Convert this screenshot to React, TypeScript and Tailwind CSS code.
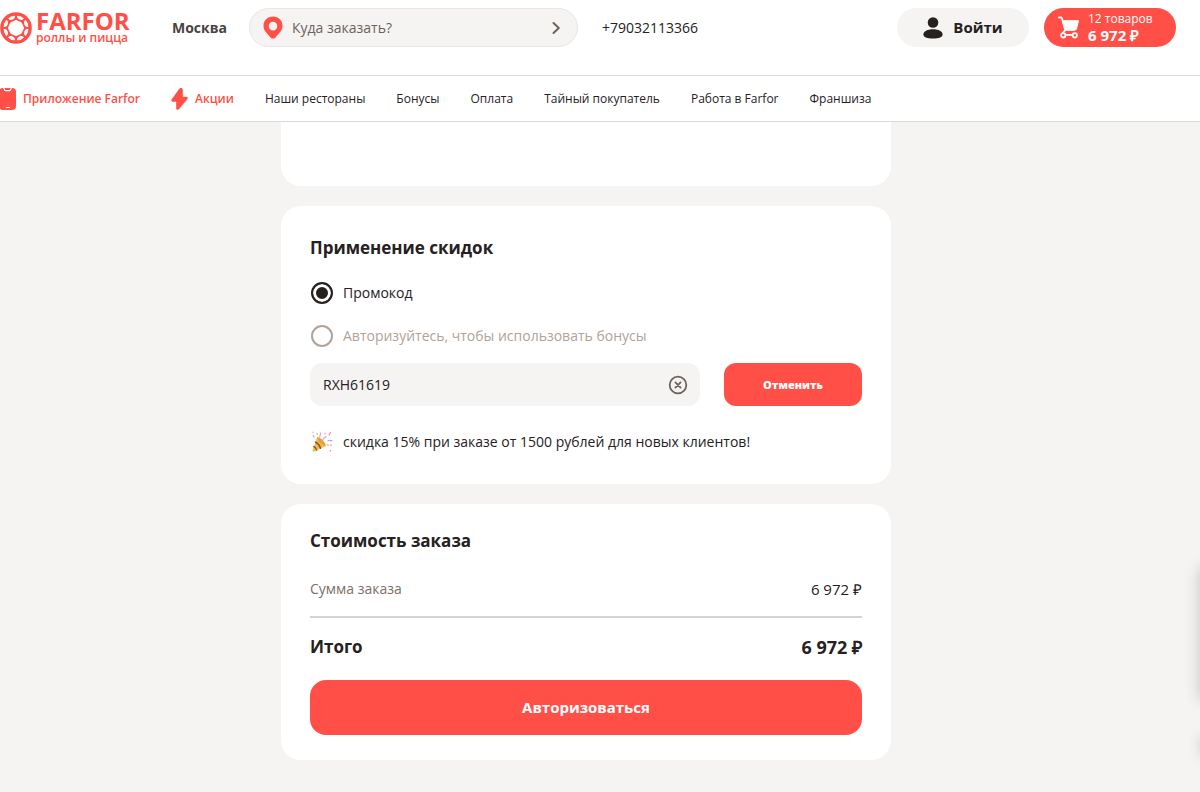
import { useState } from "react"

const links = ["Наши рестораны", "Бонусы", "Оплата", "Тайный покупатель", "Работа в Farfor", "Франшиза"]

const petals = [0, 45, 90, 135, 180, 225, 270, 315]

function LogoMark() {
  return (
    <svg viewBox="0 0 32 32" className="size-8 shrink-0" aria-hidden="true">
      <circle cx="16" cy="16" r="15.8" fill="#ff4f47" />
      <path d="M16 8.300 21.300 10.700 23.700 16 21.300 21.300 16 23.700 10.700 21.300 8.300 16 10.700 10.700Z" fill="#fff" stroke="#fff" strokeWidth=".8" strokeLinejoin="round" />
      {petals.map(a => (
        <path key={a} d="M12.300 4.300Q16 2.500 19.700 4.300C19.300 5.900 18.400 6.900 16 6.900S12.700 5.900 12.300 4.300Z" fill="#fff" transform={`rotate(${a + 22.5} 16 16)`} />
      ))}
    </svg>
  )
}

function PinIcon() {
  return (
    <svg viewBox="0 0 20 23" className="h-[23px] w-5 shrink-0" aria-hidden="true">
      <path fillRule="evenodd" fill="#ff4f47" d="M10 .5C4.600.5.500 4.500.500 9.800c0 4.700 3.300 7.400 7 11.600 1.500 1.600 3.500 1.600 5 0 3.700-4.200 7-6.900 7-11.600C19.500 4.500 15.400.5 10 .5Zm0 5.300a4.300 4.300 0 1 1 0 8.600 4.300 4.300 0 0 1 0-8.600Z" />
    </svg>
  )
}

function UserIcon() {
  return (
    <svg viewBox="0 0 20 22" className="h-[22px] w-5 shrink-0" fill="#26211e" aria-hidden="true">
      <circle cx="10" cy="5.500" r="5.300" />
      <path d="M10 12.200c5.600 0 9.600 2.200 9.600 5.200 0 2.700-3.600 4.100-9.600 4.100S.4 20.100.4 17.400c0-3 4-5.200 9.600-5.200Z" />
    </svg>
  )
}

function CartIcon() {
  return (
    <svg viewBox="0 0 22 23" className="h-[23px] w-[22px] shrink-0" fill="none" stroke="#fff" strokeWidth="1.800" strokeLinecap="round" strokeLinejoin="round" aria-hidden="true">
      <path d="M1 1.500h1.800c.6 0 1 .3 1.200.9L7.200 14 4.800 17" />
      <path d="M4.900 4.700h15.600l-2 8.100a2 2 0 0 1-1.900 1.500H7.500Z" fill="#fff" strokeWidth="1" />
      <circle cx="5.300" cy="19.300" r="2.200" />
      <circle cx="16.800" cy="19.300" r="2.200" />
      <path d="M7.500 18.800h7" />
    </svg>
  )
}

function PhoneIcon() {
  return (
    <svg viewBox="0 0 16 22" className="h-[22px] w-4 shrink-0" aria-hidden="true">
      <rect x="-1" width="17" height="22" rx="4" fill="#ff4f47" />
      <path d="M3.500-.5 4.500 1.700q.4.900 1.300.9h3.400q.9 0 1.300-.9L11.500-.5" fill="none" stroke="#fff" strokeWidth="1.200" />
      <path d="M6.500 19.500h3" stroke="#fff" strokeWidth="1.200" strokeLinecap="round" />
    </svg>
  )
}

function BoltIcon() {
  return (
    <svg viewBox="0 0 17 22" className="h-[22px] w-[17px] shrink-0" fill="#ff4f47" aria-hidden="true">
      <path d="M8.300.8.700 11.300c-.8 1.200-.3 2.400 1.100 2.400h3.400v6.500c0 1.800 1.700 2.200 2.900.9l8.100-9.900c.9-1.100.4-2.500-1-2.500H11.800V1.900C11.800-.1 9.500-.7 8.300.8Z" />
    </svg>
  )
}

function PopperIcon() {
  return (
    <svg viewBox="0 0 22 22" className="size-[22px] shrink-0" fill="none" strokeLinecap="round" aria-hidden="true">
      <path d="M1.500 19.500 6 6.500c3 .3 7.500 4.500 8.500 8.700L3 20.500c-.9.400-1.800-.2-1.500-1Z" fill="#f6bb4a" />
      <path d="M4.500 11c2.200 1.200 4.300 3.800 5 6.200M2.800 15.500c1.300.7 2.400 2 2.900 3.600" stroke="#8a5a3c" strokeWidth="1.500" />
      <path d="M6 6.500c2.500-1.200 9.500 5.500 8.500 8.700C11 14.500 6.500 10 6 6.500Z" fill="#e5a23a" />
      <path d="M8.500 6c.3-1.500 1.600-2 1-4M12 8.500c1.500-.5 1-2.500 3-3" stroke="#f5a3c8" strokeWidth="1.300" />
      <path d="M2 1.200v.4M2.200 4.500 3 6M17 9.800c1.500-.9 2.500.3 4-.3" stroke="#b5aaf5" strokeWidth="1.300" />
      <path d="M14 2.500v.3M19.500 1.500 18 4M20 14v.5M19.500 19.500v.5" stroke="#f291b8" strokeWidth="1.400" />
      <path d="M16 13.500l1.500.8M6 2.500l.5 1" stroke="#f3b548" strokeWidth="1.300" />
    </svg>
  )
}

export default function App() {
  const [code, setCode] = useState("RXH61619")

  return (
    <div className="relative min-h-screen overflow-hidden bg-[#f5f4f2] pb-8 font-['Open_Sans',sans-serif] text-sm font-medium text-[#26211e]">
      <header className="bg-white">
        <div className="flex items-start pt-2 pr-6 pb-7">
          <a href="#" className="flex w-[172px] items-start gap-1 pt-1 text-[#ff4f47]">
            <LogoMark />
            <span className="flex flex-col">
              <span className="text-2xl leading-[18px] font-bold">FARFOR</span>
              <span className="text-xs leading-4 font-semibold">роллы и пицца</span>
            </span>
          </a>
          <div className="flex flex-1 items-center">
            <button className="w-[77px] text-left font-bold text-[#4a4340]">Москва</button>
            <button className="flex h-[39px] w-[329px] items-center gap-[9px] rounded-full border border-[#e9e6e3] bg-[#f5f4f2] px-[13px] text-[#6e625d]">
              <PinIcon />
              <span className="flex-1 text-left">Куда заказать?</span>
              <svg viewBox="0 0 16 16" className="size-4" fill="none" stroke="#6e625d" strokeWidth="2" strokeLinecap="round" strokeLinejoin="round" aria-hidden="true">
                <path d="M5.500 3 10.800 8l-5.300 5" />
              </svg>
            </button>
            <a href="tel:+79032113366" className="ml-6">+79032113366</a>
          </div>
          <div className="flex gap-[15px]">
            <button className="flex h-[39px] w-[132px] items-center justify-center gap-[10px] rounded-full bg-[#f5f4f2] text-[15px] font-bold">
              <UserIcon />
              Войти
            </button>
            <button className="flex h-[39px] w-[132px] items-center gap-2 rounded-full bg-[#ff4f47] pl-[14px] text-left text-white">
              <CartIcon />
              <span className="flex flex-col pb-0.5">
                <span className="text-xs leading-4 font-medium">12 товаров</span>
                <span className="text-[15px] leading-4 font-bold">6 972 ₽</span>
              </span>
            </button>
          </div>
        </div>
        <nav className="flex h-[47px] items-center gap-[31px] border-y border-[#dcdad8] text-xs whitespace-nowrap">
          <a href="#" className="flex items-center gap-[7px] font-semibold text-[#ff4f47]">
            <PhoneIcon />
            Приложение Farfor
          </a>
          <a href="#" className="flex items-center gap-[7px] font-semibold text-[#ff4f47]">
            <BoltIcon />
            Акции
          </a>
          {links.map(l => (
            <a key={l} href="#">{l}</a>
          ))}
        </nav>
      </header>

      <main className="pr-7">
        <div className="mx-auto flex max-w-[610px] flex-col gap-5">
          <div className="h-16 rounded-b-[20px] bg-white" />

          <section className="rounded-[20px] bg-white px-[29px] py-[30px]">
            <h2 className="text-[17px] leading-6 font-bold">Применение скидок</h2>
            <label className="mt-[22px] flex h-[22px] items-center gap-[10px]">
              <input type="radio" name="discount" defaultChecked
                className="ml-px size-[22px] appearance-none rounded-full border-2 border-[#26211e] checked:bg-[#26211e] checked:shadow-[inset_0_0_0_3px_#fff]" />
              Промокод
            </label>
            <label className="mt-[21px] flex h-[22px] items-center gap-[10px] text-[#b0a399]">
              <input type="radio" name="discount" disabled
                className="ml-px size-[22px] appearance-none rounded-full border-2 border-[#b0a399]" />
              Авторизуйтесь, чтобы использовать бонусы
            </label>
            <div className="mt-4 flex gap-6">
              <div className="flex h-[43px] flex-1 items-center rounded-xl bg-[#f5f4f2] pr-3 pl-[13px]">
                <input type="text" aria-label="Промокод" value={code} onChange={e => setCode(e.target.value)}
                  className="min-w-0 flex-1 bg-transparent outline-none" />
                <button aria-label="Очистить" onClick={() => setCode("")}>
                  <svg viewBox="0 0 20 20" className="size-5" fill="none" stroke="#6e625d" strokeWidth="1.800" strokeLinecap="round" aria-hidden="true">
                    <circle cx="10" cy="10" r="8.300" />
                    <path d="m7.400 7.400 5.200 5.200m0-5.200-5.200 5.200" />
                  </svg>
                </button>
              </div>
              <button className="h-[43px] w-[138px] rounded-xl bg-[#ff4f47] text-[11px] font-extrabold text-white">Отменить</button>
            </div>
            <p className="mt-6 flex h-6 items-center gap-[10px] pl-px">
              <PopperIcon />
              скидка 15% при заказе от 1500 рублей для новых клиентов!
            </p>
          </section>

          <section className="rounded-[20px] bg-white px-[29px] py-[25px]">
            <h2 className="text-[17px] leading-6 font-bold">Стоимость заказа</h2>
            <div className="mt-6 flex justify-between border-b-2 border-[#d6d3d1] pb-[15px] leading-6">
              <span className="text-[#7d706a]">Сумма заказа</span>
              <span className="text-[15px] leading-6">6 972 ₽</span>
            </div>
            <div className="mt-[17px] flex justify-between text-[17px] leading-6 font-bold">
              <span>Итого</span>
              <span className="text-lg leading-6">6 972 ₽</span>
            </div>
            <button className="mt-[21px] h-[55px] w-full rounded-2xl bg-[#ff4f47] text-[15px] font-bold text-white">Авторизоваться</button>
          </section>
        </div>
      </main>

      {/* side widgets parked past the right edge, only their shadow is seen */}
      <div className="absolute top-[568px] -right-10 h-[132px] w-10 shadow-[0_0_16px_rgba(0,0,0,0.2)]" />
      <div className="absolute top-[736px] -right-10 h-5 w-10 shadow-[0_0_14px_rgba(0,0,0,0.15)]" />
    </div>
  )
}
